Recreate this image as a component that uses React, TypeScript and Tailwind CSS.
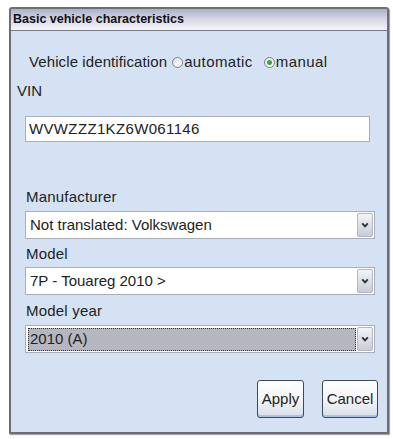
const font = { fontFamily: '"Liberation Sans", Arial, sans-serif' };

const Chevron = () => (
  <svg width="8" height="6" viewBox="0 0 8 6">
    <path d="M1.2 1.4 L4 4.4 L6.8 1.4" fill="none" stroke="#2a2d38" strokeWidth="1.8" />
  </svg>
);

const Radio = ({ checked }: { checked?: boolean }) => (
  <span className="inline-flex h-[11px] w-[11px] items-center justify-center rounded-full border border-[#7a7f8a] bg-gradient-to-br from-[#dfe2e7] to-white">
    {checked && <span className="h-[5px] w-[5px] rounded-full bg-[#3fa33f]" />}
  </span>
);

interface SelectBoxProps {
  value: string;
  focused?: boolean;
}

const SelectBox = ({ value, focused }: SelectBoxProps) => (
  <div className="ml-[14px] flex h-[28px] w-[350px] items-center border border-[#a9aeb8] bg-white pl-[2px] pr-[1px]">
    <div
      className={
        focused
          ? "flex h-[23px] flex-1 items-center border border-dotted border-[#333] bg-[#b6b6c0] pl-[1px] text-[15px] text-[#222]"
          : "flex h-[23px] flex-1 items-center pl-[2px] text-[15px] text-[#222]"
      }
    >
      {value}
    </div>
    <div className="ml-[1px] flex h-[24px] w-[16px] items-center justify-center rounded-[2px] border border-[#b3b7c4] bg-gradient-to-b from-[#f3f4f8] to-[#c9ccd6]">
      <Chevron />
    </div>
  </div>
);

const Button = ({ label, width }: { label: string; width: string }) => (
  <div
    className={`${width} flex h-[38px] items-center justify-center rounded-[3px] border border-[#3c4a5e] bg-gradient-to-b from-white via-[#f4f5f8] to-[#d9dee9] text-[15px] text-[#222] shadow-[inset_0_-2px_0_#a9c3e6]`}
  >
    {label}
  </div>
);

export default function App() {
  return (
    <div className="h-[439px] w-[393px] bg-white pl-[9px] pt-[7px]" style={font}>
      <div className="flex h-[427px] w-[380px] flex-col rounded-t-[3px] border-2 border-[#6b6e76] shadow-[1px_1px_1px_#9a9aa2]">
        <div className="flex h-[22px] items-center border-b border-[#777c88] bg-gradient-to-b from-[#aeaecb] via-[#d8d8e6] to-[#f5f5f9] pl-[2px] text-[12.5px] font-bold text-[#111]">
          Basic vehicle characteristics
        </div>
        <div className="flex flex-1 flex-col bg-[#d5e2f3] text-[#222]">
          <div className="mt-[22px] flex items-center pl-[18px] text-[15px] leading-[18px] tracking-[0.1px]">
            <span>Vehicle identification</span>
            <span className="ml-[5px] mr-[1px] flex"><Radio /></span>
            <span className="tracking-[0.4px]">automatic</span>
            <span className="ml-[11px] mr-[1px] flex"><Radio checked /></span>
            <span className="tracking-[0.4px]">manual</span>
          </div>
          <div className="mt-[11px] pl-[6px] text-[15px] leading-[18px]">VIN</div>
          <div className="ml-[14px] mt-[16px] flex h-[26px] w-[345px] items-center border border-[#a9aeb8] bg-white pl-[3px] text-[15px] tracking-[0.35px] text-[#222]">
            WVWZZZ1KZ6W061146
          </div>
          <div className="ml-[15px] mt-[46px] text-[15px] leading-[18px] tracking-[0.2px]">Manufacturer</div>
          <div className="mt-[5px]">
            <SelectBox value="Not translated: Volkswagen" />
          </div>
          <div className="ml-[15px] mt-[6px] text-[15px] leading-[18px] tracking-[0.2px]">Model</div>
          <div className="mt-[4px]">
            <SelectBox value="7P - Touareg 2010 >" />
          </div>
          <div className="ml-[15px] mt-[7px] text-[15px] leading-[18px] tracking-[0.2px]">Model year</div>
          <div className="mt-[5px]">
            <SelectBox value="2010 (A)" focused />
          </div>
          <div className="mr-[9px] mt-[27px] flex justify-end gap-[18px]">
            <Button label="Apply" width="w-[47px]" />
            <Button label="Cancel" width="w-[56px]" />
          </div>
        </div>
      </div>
    </div>
  );
}
